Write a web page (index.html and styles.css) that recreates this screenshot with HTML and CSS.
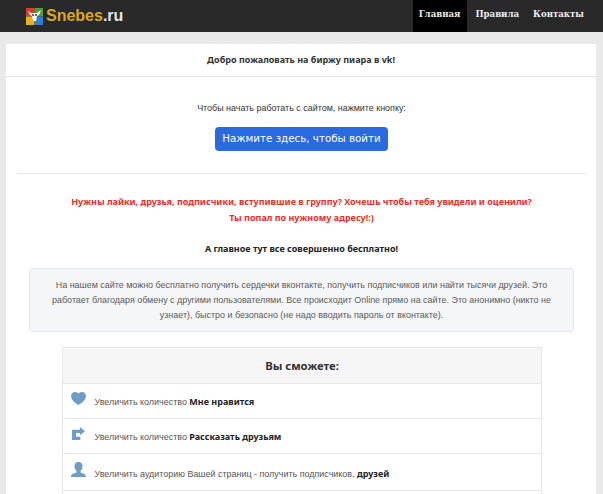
FILE: index.html
```html
<!DOCTYPE html>
<html lang="ru">
<head>
<meta charset="utf-8">
<title>Snebes.ru</title>
<link rel="stylesheet" href="styles.css">
</head>
<body>
<nav class="navbar">
  <a class="brand" href="#">
    <svg class="logo" viewBox="0 0 17 17" width="17" height="17">
      <rect width="8.5" height="8.5" fill="#d8402c"/>
      <rect x="8.5" width="8.5" height="8.5" fill="#4f9e3a"/>
      <rect y="8.5" width="8.5" height="8.5" fill="#eab020"/>
      <rect x="8.5" y="8.5" width="8.5" height="8.5" fill="#2f7fd6"/>
      <path d="M2 3 L5 5 H11 L15 2 L13 7 L11 8 L10 13 H7 L6 8 L4 7 Z" fill="#fff"/>
      <circle cx="7" cy="7" r="1" fill="#333"/>
      <circle cx="10" cy="7" r="1" fill="#333"/>
    </svg>
    <span class="brand-name">Snebes</span><span class="brand-tld">.ru</span>
  </a>
  <ul class="menu">
    <li><a class="menu-link active" href="#">Главная</a></li>
    <li><a class="menu-link" href="#">Правила</a></li>
    <li><a class="menu-link" href="#">Контакты</a></li>
  </ul>
</nav>
<main class="page">
  <header class="page-head">Добро пожаловать на биржу пиара в vk!</header>
  <div class="page-body">
    <p class="lead">Чтобы начать работать с сайтом, нажмите кнопку:</p>
    <div class="cta-row"><a class="cta" href="#">Нажмите здесь, чтобы войти</a></div>
    <hr class="rule">
    <p class="promo">Нужны лайки, друзья, подписчики, вступившие в группу? Хочешь чтобы тебя увидели и оценили?<br>Ты попал по нужному адресу!:)</p>
    <p class="free">А главное тут все совершенно бесплатно!</p>
    <div class="well">На нашем сайте можно бесплатно получить сердечки вконтакте, получить подписчиков или найти тысячи друзей. Это работает благодаря обмену с другими пользователями. Все происходит Online прямо на сайте. Это анонимно (никто не узнает), быстро и безопасно (не надо вводить пароль от вконтакте).</div>
    <section class="features">
      <h2 class="features-title">Вы сможете:</h2>
      <div class="feature">
        <svg class="icon" viewBox="0 0 16 14" width="15" height="13"><path d="M8 14 C5 12 0 9 0 4.200 C0 1.500 2.200 0 4.300 0 C6 0 7.300 .8 8 1.800 C8.700 .8 10 0 11.700 0 C13.800 0 16 1.500 16 4.200 C16 9 11 12 8 14 Z" fill="#6d9cc4"/></svg>
        <span>Увеличить количество <b>Мне нравится</b></span>
      </div>
      <div class="feature">
        <svg class="icon" viewBox="0 0 14 14" width="15" height="13"><path d="M8.500 0 L14 4.500 L8.500 9 V6.500 H4.500 V10.500 H9 V14 H0 V3 H8.500 Z" fill="#6d9cc4"/></svg>
        <span>Увеличить количество <b>Рассказать друзьям</b></span>
      </div>
      <div class="feature feature-tall">
        <svg class="icon" viewBox="0 0 15 15" width="15" height="15"><path d="M7.500 0 C10.500 0 11.500 2 11.500 4.200 C11.500 6.500 10.500 8 9.500 9 V10.500 C11.500 11.500 15 11.500 15 15 H0 C0 11.500 3.500 11.500 5.500 10.500 V9 C4.500 8 3.500 6.500 3.500 4.200 C3.500 2 4.500 0 7.500 0 Z" fill="#6d9cc4"/></svg>
        <span>Увеличить аудиторию Вашей страниц - получить подписчиков, <b>друзей</b></span>
      </div>
      <div class="feature"></div>
    </section>
  </div>
</main>
</body>
</html>
```
FILE: styles.css
```css
* { box-sizing: border-box; }
html, body { margin: 0; height: 100%; overflow: hidden; }
body {
  background: #e9e9e9;
  font-family: "Liberation Sans", Tahoma, sans-serif;
  font-size: 8.95px;
  color: #444;
}
b, .page-head, .promo, .free {
  font-family: "Noto Sans", Tahoma, sans-serif;
  font-size: 9px;
  font-weight: 700;
}
.navbar {
  height: 32px;
  background: #292929;
  display: flex;
  justify-content: space-between;
  padding: 0 13px 0 26px;
}
.brand {
  display: flex;
  align-items: center;
  gap: 3px;
  text-decoration: none;
  font-family: "Liberation Sans", Arial, sans-serif;
  font-size: 16px;
  font-weight: 700;
}
.logo { flex: none; }
.brand-name { color: #dba824; }
.brand-tld { color: #e4e4e4; margin-left: -3px; }
.menu { display: flex; list-style: none; margin: 0; padding: 0; }
.menu-link {
  display: block;
  height: 32px;
  line-height: 28px;
  padding: 0 6px;
  margin-left: 2px;
  font-family: "DejaVu Serif", serif;
  font-size: 8.6px;
  font-weight: 700;
  color: #eee;
  text-decoration: none;
}
.menu-link.active { background: #000; padding: 0 7px 0 6px; margin-left: 0; }
.page {
  margin: 12px 7px 0 6px;
  background: #fff;
}
.page-head {
  height: 33px;
  line-height: 32px;
  text-align: center;
  color: #333;
  border-bottom: 1px solid #e4e4e4;
}
.page-body { padding: 0 10px 0 11px; }
.lead { margin: 23px 0 0; text-align: center; line-height: 16px; color: #333; }
.cta-row { display: flex; justify-content: center; margin-top: 11px; }
.cta {
  height: 24px;
  line-height: 23px;
  padding: 0 7px;
  background: #2a6ae0;
  border-radius: 4px;
  color: #fff;
  font-family: "DejaVu Sans", sans-serif;
  font-size: 10.3px;
  text-decoration: none;
}
.rule { border: 0; border-top: 1px solid #e6e6e6; margin: 22px 0 0; }
.promo {
  margin: 20px 0 0;
  text-align: center;
  color: #e8302a;
  line-height: 16px;
}
.free { margin: 17px 0 0; text-align: center; color: #222; line-height: 12px; }
.well {
  margin: 13px 12px 0;
  padding: 9px 16px;
  height: 64px;
  background: #f5f6f8;
  border: 1px solid #e4e6ea;
  border-radius: 4px;
  text-align: center;
  line-height: 15px;
  color: #5a5a5a;
}
.features {
  margin: 15px 44px 0 45px;
  border: 1px solid #e8e8e8;
  border-bottom: 0;
}
.features-title {
  margin: 0;
  height: 35px;
  line-height: 35px;
  background: #f6f6f6;
  text-align: center;
  font-family: "Noto Sans", Tahoma, sans-serif;
  font-size: 11.300px;
  font-weight: 700;
  color: #333;
}
.feature {
  height: 35px;
  padding: 8px 8px 0;
  border-top: 1px solid #e8e8e8;
  color: #555;
}
.feature-tall { height: 37px; }
.feature b { color: #222; }
.icon { vertical-align: 0; margin-right: 6px; }
```
